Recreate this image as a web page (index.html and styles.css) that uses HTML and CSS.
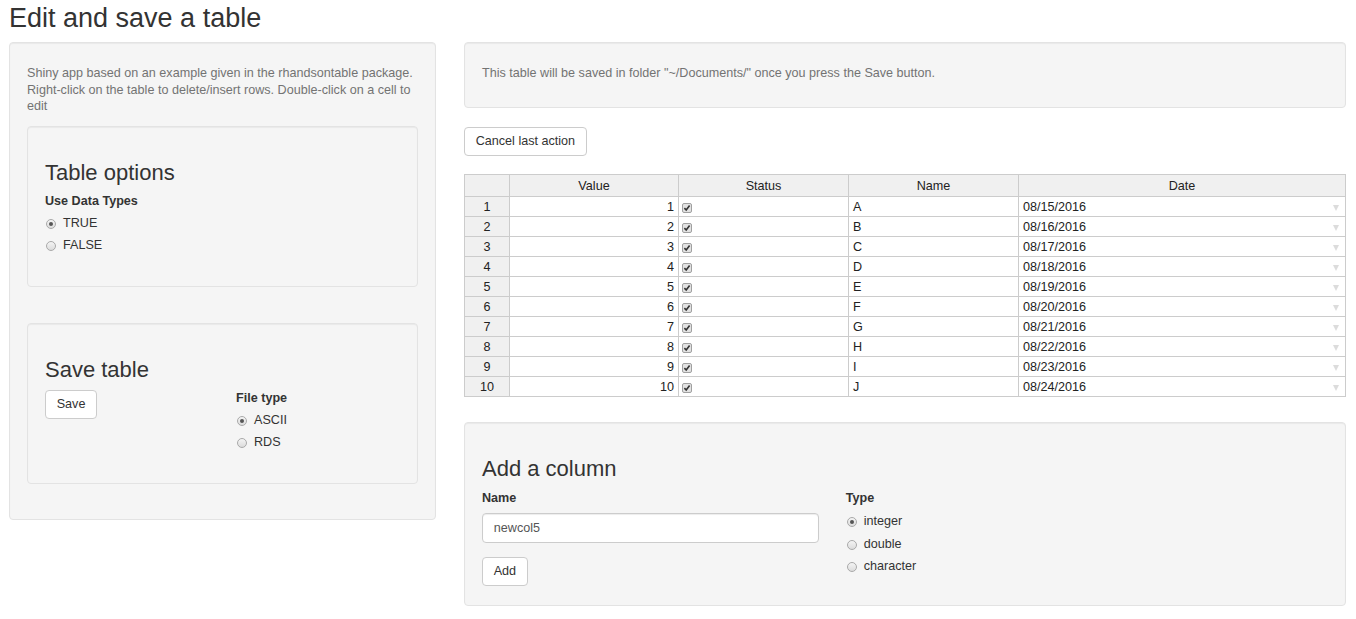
FILE: index.html
```html
<!DOCTYPE html>
<html lang="en">
<head>
<meta charset="utf-8">
<title>Edit and save a table</title>
<link rel="stylesheet" href="styles.css">
</head>
<body>
<div class="page">
  <h1 class="title">Edit and save a table</h1>
  <div class="layout">
    <aside class="well sidebar">
      <p class="help">Shiny app based on an example given in the rhandsontable package. Right-click on the table to delete/insert rows. Double-click on a cell to edit</p>

      <section class="well inner">
        <h3>Table options</h3>
        <div class="group">
          <div class="label">Use Data Types</div>
          <div class="radios">
            <label class="radio"><span class="dot on"></span>TRUE</label>
            <label class="radio"><span class="dot"></span>FALSE</label>
          </div>
        </div>
      </section>

      <section class="well inner save">
        <h3>Save table</h3>
        <div class="cols half">
          <div class="save-col"><button class="btn">Save</button></div>
          <div class="group">
            <div class="label">File type</div>
            <div class="radios">
              <label class="radio"><span class="dot on"></span>ASCII</label>
              <label class="radio"><span class="dot"></span>RDS</label>
            </div>
          </div>
        </div>
      </section>
    </aside>

    <main class="main">
      <div class="well note">
        <p class="help">This table will be saved in folder "~/Documents/" once you press the Save button.</p>
      </div>

      <div class="actions"><button class="btn">Cancel last action</button></div>

      <table class="hot">
        <colgroup>
          <col class="c-rh"><col class="c-val"><col class="c-st"><col class="c-nm"><col class="c-dt">
        </colgroup>
        <thead>
          <tr><th></th><th>Value</th><th>Status</th><th>Name</th><th>Date</th></tr>
        </thead>
        <tbody>
          <tr><th>1</th><td class="num">1</td><td class="chk"><svg class="cb" viewBox="0 0 10 10"><rect x="0.5" y="0.5" width="9" height="9" rx="1.5"/><path d="M2.4 5.1 L4.2 7 L7.6 2.6"/></svg></td><td>A</td><td>08/15/2016<span class="arrow"></span></td></tr>
          <tr><th>2</th><td class="num">2</td><td class="chk"><svg class="cb" viewBox="0 0 10 10"><rect x="0.5" y="0.5" width="9" height="9" rx="1.5"/><path d="M2.4 5.1 L4.2 7 L7.6 2.6"/></svg></td><td>B</td><td>08/16/2016<span class="arrow"></span></td></tr>
          <tr><th>3</th><td class="num">3</td><td class="chk"><svg class="cb" viewBox="0 0 10 10"><rect x="0.5" y="0.5" width="9" height="9" rx="1.5"/><path d="M2.4 5.1 L4.2 7 L7.6 2.6"/></svg></td><td>C</td><td>08/17/2016<span class="arrow"></span></td></tr>
          <tr><th>4</th><td class="num">4</td><td class="chk"><svg class="cb" viewBox="0 0 10 10"><rect x="0.5" y="0.5" width="9" height="9" rx="1.5"/><path d="M2.4 5.1 L4.2 7 L7.6 2.6"/></svg></td><td>D</td><td>08/18/2016<span class="arrow"></span></td></tr>
          <tr><th>5</th><td class="num">5</td><td class="chk"><svg class="cb" viewBox="0 0 10 10"><rect x="0.5" y="0.5" width="9" height="9" rx="1.5"/><path d="M2.4 5.1 L4.2 7 L7.6 2.6"/></svg></td><td>E</td><td>08/19/2016<span class="arrow"></span></td></tr>
          <tr><th>6</th><td class="num">6</td><td class="chk"><svg class="cb" viewBox="0 0 10 10"><rect x="0.5" y="0.5" width="9" height="9" rx="1.5"/><path d="M2.4 5.1 L4.2 7 L7.6 2.6"/></svg></td><td>F</td><td>08/20/2016<span class="arrow"></span></td></tr>
          <tr><th>7</th><td class="num">7</td><td class="chk"><svg class="cb" viewBox="0 0 10 10"><rect x="0.5" y="0.5" width="9" height="9" rx="1.5"/><path d="M2.4 5.1 L4.2 7 L7.6 2.6"/></svg></td><td>G</td><td>08/21/2016<span class="arrow"></span></td></tr>
          <tr><th>8</th><td class="num">8</td><td class="chk"><svg class="cb" viewBox="0 0 10 10"><rect x="0.5" y="0.5" width="9" height="9" rx="1.5"/><path d="M2.4 5.1 L4.2 7 L7.6 2.6"/></svg></td><td>H</td><td>08/22/2016<span class="arrow"></span></td></tr>
          <tr><th>9</th><td class="num">9</td><td class="chk"><svg class="cb" viewBox="0 0 10 10"><rect x="0.5" y="0.5" width="9" height="9" rx="1.5"/><path d="M2.4 5.1 L4.2 7 L7.6 2.6"/></svg></td><td>I</td><td>08/23/2016<span class="arrow"></span></td></tr>
          <tr><th>10</th><td class="num">10</td><td class="chk"><svg class="cb" viewBox="0 0 10 10"><rect x="0.5" y="0.5" width="9" height="9" rx="1.5"/><path d="M2.4 5.1 L4.2 7 L7.6 2.6"/></svg></td><td>J</td><td>08/24/2016<span class="arrow"></span></td></tr>
        </tbody>
      </table>

      <section class="well addcol">
        <h3>Add a column</h3>
        <div class="cols wide">
          <div>
            <div class="label">Name</div>
            <input class="input" type="text" value="newcol5">
            <div class="add-row"><button class="btn">Add</button></div>
          </div>
          <div class="group">
            <div class="label">Type</div>
            <div class="radios">
              <label class="radio"><span class="dot on"></span>integer</label>
              <label class="radio"><span class="dot"></span>double</label>
              <label class="radio"><span class="dot"></span>character</label>
            </div>
          </div>
        </div>
      </section>
    </main>
  </div>
</div>
</body>
</html>
```

FILE: styles.css
```css
* { box-sizing: border-box; }

body {
  margin: 0;
  font-family: "Liberation Sans", Arial, Helvetica, sans-serif;
  font-size: 12.6px;
  line-height: 18px;
  color: #333;
  background: #fff;
}

.page { padding: 0 10px 0 9px; }

.title {
  font-size: 27px;
  font-weight: 400;
  line-height: 30px;
  margin: 3px 0 9px;
  color: #333;
}

.layout {
  display: grid;
  grid-template-columns: 427px 1fr;
  column-gap: 28px;
  align-items: start;
}

.well {
  background: #f5f5f5;
  border: 1px solid #e3e3e3;
  border-radius: 4px;
  padding: 17px;
  box-shadow: inset 0 1px 1px rgba(0, 0, 0, 0.05);
}

.help {
  color: #737373;
  margin: 5px 0 11.5px;
  line-height: 16.6px;
}

.note .help {
  margin: 4px 0 8px;
  line-height: 18px;
}

.inner + .inner { margin-top: 36px; }
.inner.save { margin-bottom: 18px; }

h3 {
  font-size: 22px;
  font-weight: 400;
  line-height: 24px;
  margin: 17px 0 8px;
  color: #333;
}

.inner h3 { margin-bottom: 7px; }
.inner .group { margin-bottom: 15px; }
.save-col { padding-top: 1px; }

.label { font-weight: 700; }

.group { margin-bottom: 14px; }

.radios {
  margin-top: 4px;
  display: flex;
  flex-direction: column;
  gap: 4px;
}

.addcol .radios {
  margin-top: 5px;
  gap: 4.5px;
}

.radio {
  display: flex;
  align-items: center;
  gap: 7px;
  line-height: 18px;
  padding-left: 1px;
}

.dot {
  width: 10px;
  height: 10px;
  border-radius: 50%;
  border: 1px solid #a9a9a9;
  background: linear-gradient(#f4f4f4, #dcdcdc);
  position: relative;
  flex: none;
  margin-top: 2px;
}

.dot.on::after {
  content: "";
  position: absolute;
  left: 2px;
  top: 2px;
  width: 4px;
  height: 4px;
  border-radius: 50%;
  background: #555;
}

.btn {
  display: inline-block;
  font: inherit;
  color: #333;
  background: #fff;
  border: 1px solid #ccc;
  border-radius: 4px;
  padding: 5px 10.7px;
  line-height: 17px;
  cursor: pointer;
}

.cols { display: grid; column-gap: 27px; }
.cols.half { grid-template-columns: 164px 1fr; }
.cols.wide { grid-template-columns: 336.75px 1fr; }

.actions { display: flex; margin: 19px 0 18px; }

/* table */
.hot {
  width: 882px;
  table-layout: fixed;
  border-collapse: separate;
  border-spacing: 0;
  font-size: 12.6px;
  color: #222;
  margin-bottom: 25px;
  background: #fff;
}

.c-rh { width: 46px; }
.c-val { width: 169px; }
.c-st { width: 170px; }
.c-nm { width: 170px; }
.c-dt { width: 327px; }

.hot th,
.hot td {
  border-right: 1px solid #ccc;
  border-bottom: 1px solid #ccc;
  padding: 1px 4px 0;
  line-height: 18px;
  white-space: nowrap;
  overflow: hidden;
  text-align: left;
  font-weight: 400;
}

.hot th {
  background: #f0f0f0;
  text-align: center;
  color: #222;
}

.hot tr > :first-child { border-left: 1px solid #ccc; }

.hot thead th {
  border-top: 1px solid #ccc;
  padding: 1px 4px 0;
  line-height: 20px;
}

.hot td.num { text-align: right; }
.hot td.chk { padding-left: 3px; }

.cb {
  display: inline-block;
  width: 10px;
  height: 10px;
  vertical-align: -2px;
}

.cb rect {
  fill: #e2e2e2;
  stroke: #a0a0a0;
  stroke-width: 1;
}

.cb path {
  fill: none;
  stroke: #333;
  stroke-width: 1.6;
}

.arrow {
  float: right;
  width: 0;
  height: 0;
  margin: 7px 2px 0 0;
  border-left: 3px solid transparent;
  border-right: 3px solid transparent;
  border-top: 6px solid #dcdcdc;
}

/* add column */
.input {
  display: block;
  width: 100%;
  height: 30px;
  margin-top: 6px;
  padding: 0 10.8px;
  font: inherit;
  color: #555;
  background: #fff;
  border: 1px solid #ccc;
  border-radius: 4px;
  box-shadow: inset 0 1px 1px rgba(0, 0, 0, 0.075);
}

.add-row { display: flex; margin-top: 13.5px; }

.addcol .group { margin-bottom: 13px; }
```
